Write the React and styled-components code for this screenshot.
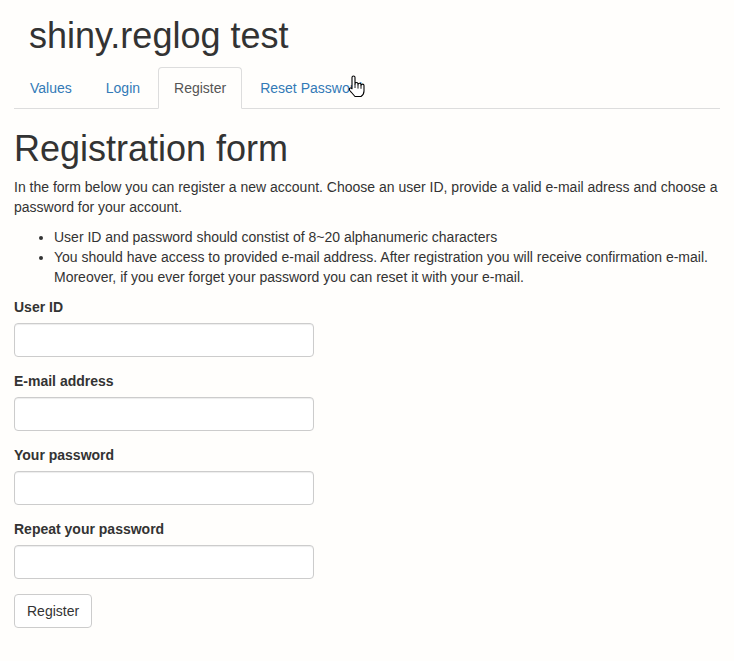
import React from "react";
import styled, { createGlobalStyle } from "styled-components";

const GlobalStyle = createGlobalStyle`
  html, body {
    margin: 0;
    padding: 0;
    background: #fffefc;
  }
  body {
    font-family: "Liberation Sans", Arial, Helvetica, sans-serif;
    font-size: 14px;
    line-height: 1.42857;
    color: #333;
  }
  * { box-sizing: border-box; }
`;

const Page = styled.div`
  padding: 0 14px;
`;

const Title = styled.h2`
  margin: 16px 0 11px;
  padding-left: 15px;
  font-size: 36px;
  font-weight: 500;
  line-height: 1.1;
`;

const Tabs = styled.ul`
  list-style: none;
  margin: 0;
  padding: 0;
  display: flex;
  border-bottom: 1px solid #ddd;
`;

const TabItem = styled.li`
  position: relative;
  margin: 0 2px -1px 0;
`;

const TabLink = styled.a`
  display: block;
  padding: 10px 15px;
  line-height: 20px;
  border: 1px solid ${(p) => (p.$active ? "#ddd" : "transparent")};
  border-bottom-color: transparent;
  border-radius: 4px 4px 0 0;
  background: ${(p) => (p.$active ? "#fffefc" : "transparent")};
  color: ${(p) => (p.$active ? "#555" : "#337ab7")};
  text-decoration: none;
  cursor: pointer;
`;

const Cursor = styled.svg`
  position: absolute;
  left: 104px;
  top: 8px;
  width: 19px;
  height: 23px;
  pointer-events: none;
`;

const Heading = styled.h1`
  margin: 20px 0 10px;
  font-size: 36px;
  font-weight: 500;
  line-height: 1.1;
`;

const Para = styled.p`
  margin: 0 0 10px;
`;

const List = styled.ul`
  margin: 0 0 10px;
  padding-left: 40px;
`;

const FormGroup = styled.div`
  margin-bottom: 15px;
`;

const Label = styled.label`
  display: inline-block;
  margin-bottom: 5px;
  font-weight: 700;
`;

const Input = styled.input`
  display: block;
  width: 300px;
  height: 34px;
  padding: 6px 12px;
  font: inherit;
  color: #555;
  background: #fff;
  border: 1px solid #ccc;
  border-radius: 4px;
  box-shadow: inset 0 1px 1px rgba(0, 0, 0, 0.075);
`;

const Button = styled.button`
  display: inline-block;
  padding: 6px 12px;
  font: inherit;
  line-height: 20px;
  color: #333;
  background: #fff;
  border: 1px solid #ccc;
  border-radius: 4px;
  cursor: pointer;
`;

const HandCursor = () => (
  <Cursor viewBox="0 0 19 23">
    <path
      d="M4 2.5a1.5 1.5 0 0 1 3 0V9a1.5 1.5 0 0 1 3 0v.8a1.5 1.5 0 0 1 3 0v.8a1.5 1.5 0 0 1 3 0V16c0 2.5-1.5 4.5-3 5.5H7L1.8 15.5c-.8-1-.5-2.2.5-2.5.7-.2 1.3.2 1.7.8V2.5z"
      fill="#fff"
      stroke="#000"
      strokeWidth="1.1"
      strokeLinejoin="round"
    />
    <path d="M7 9v4M10 9.8v3.8M13 10.6v3.2" stroke="#000" strokeWidth="0.9" />
  </Cursor>
);

const tabs = ["Values", "Login", "Register", "Reset Password"];
const fields = ["User ID", "E-mail address", "Your password", "Repeat your password"];

export default function App() {
  return (
    <>
      <GlobalStyle />
      <Page>
        <Title>shiny.reglog test</Title>
        <Tabs>
          {tabs.map((t) => (
            <TabItem key={t}>
              <TabLink $active={t === "Register"}>{t}</TabLink>
              {t === "Reset Password" && <HandCursor />}
            </TabItem>
          ))}
        </Tabs>
        <Heading>Registration form</Heading>
        <Para>
          In the form below you can register a new account. Choose an user ID,
          provide a valid e-mail adress and choose a password for your account.
        </Para>
        <List>
          <li>User ID and password should constist of 8~20 alphanumeric characters</li>
          <li>
            You should have access to provided e-mail address. After registration
            you will receive confirmation e-mail. Moreover, if you ever forget your
            password you can reset it with your e-mail.
          </li>
        </List>
        {fields.map((f) => (
          <FormGroup key={f}>
            <Label>{f}</Label>
            <Input type={f.includes("password") ? "password" : "text"} />
          </FormGroup>
        ))}
        <Button>Register</Button>
      </Page>
    </>
  );
}
